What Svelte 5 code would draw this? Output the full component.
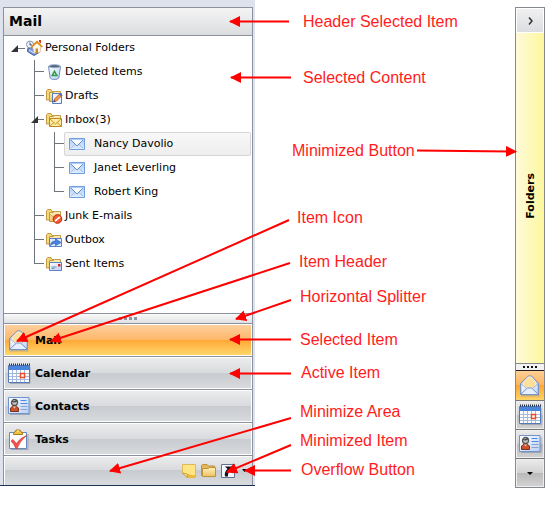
<script>
  const folders = [
    { name: 'Deleted Items', icon: 'bin' },
    { name: 'Drafts', icon: 'drafts' },
    { name: 'Inbox(3)', icon: 'inbox', children: ['Nancy Davolio', 'Janet Leverling', 'Robert King'] },
    { name: 'Junk E-mails', icon: 'junk' },
    { name: 'Outbox', icon: 'outbox' },
    { name: 'Sent Items', icon: 'sent' }
  ];
  const sections = [
    { name: 'Mail', icon: 'mail' },
    { name: 'Calendar', icon: 'calendar' },
    { name: 'Contacts', icon: 'contacts' },
    { name: 'Tasks', icon: 'tasks' }
  ];
  const minimized = [
    { name: 'Notes', icon: 'note' },
    { name: 'Folder list', icon: 'folder' },
    { name: 'Shortcuts', icon: 'shortcut' }
  ];
  let section = $state('Mail');
  let person = $state('Nancy Davolio');

  // Callouts: label position (x, top) and the arrow from its tail to its tip.
  const callouts = [
    { text: 'Header Selected Item', x: 303, y: 13, line: [289, 21.5, 230, 21.5] },
    { text: 'Selected Content', x: 303, y: 69, line: [291, 77.5, 231, 77.5] },
    { text: 'Minimized Button', x: 292, y: 142, line: [417, 150.5, 516, 151.5] },
    { text: 'Item Icon', x: 297, y: 209, line: [289, 220, 17, 341] },
    { text: 'Item Header', x: 299, y: 253, line: [290, 263, 51, 341] },
    { text: 'Horizontal Splitter', x: 300, y: 288, line: [291, 300, 236, 319] },
    { text: 'Selected Item', x: 300, y: 331, line: [291, 339.5, 230, 339.5] },
    { text: 'Active Item', x: 301, y: 364, line: [291, 373.5, 230, 373.5] },
    { text: 'Minimize Area', x: 300, y: 403, line: [291, 418, 110, 471] },
    { text: 'Minimized Item', x: 300, y: 432, line: [291, 445, 227, 472] },
    { text: 'Overflow Button', x: 301, y: 461, line: [291, 470.5, 245, 470.5] }
  ];
</script>

{#snippet folderBase()}
  <path d="M.5 2.500V12h10V3.500H6L5 1.500H1.500z" fill="#f3d676" stroke="#c39a45" />
  <path d="M3.500 13.500v-9h4l1-1h6v10z" fill="url(#folderFill)" stroke="#c39a45" />
{/snippet}

{#snippet icon(name)}
  {#if name === 'home'}
    <svg width="17" height="16" viewBox="0 0 17 16" aria-hidden="true">
      <path d="M2 8 1.500 11.500 8 15.500l5-3V7z" fill="#7b98d8" stroke="#3b5ba5" />
      <path d="M3 10l5 3 4-2" fill="none" stroke="#dfe9ff" />
      <circle cx="4" cy="4.500" r="3.500" fill="#eef2f8" stroke="#8494ad" />
      <path d="M4 2.500v2.500h2" fill="none" stroke="#3b4f77" />
      <path d="M6.500 6.500 11 2.500l4 4-1 6-6 .5z" fill="#fff8e8" stroke="#d6b27a" stroke-width=".7" />
      <path d="M5.500 7 11 1.800 16.300 7" fill="none" stroke="#e08a16" stroke-width="1.700" />
      <path d="M13 0h2v3.500l-2-1.500z" fill="#d23b20" />
      <path d="M9.500 8.500h2.500V13H9.500z" fill="#cc8730" />
    </svg>
  {:else if name === 'bin'}
    <svg width="17" height="16" viewBox="0 0 17 16" aria-hidden="true">
      <path d="M2.500 2.500h12l-1.700 11.500-2 1.300H6.200l-2-1.300z" fill="url(#paper)" stroke="#6c8cc0" />
      <ellipse cx="8.500" cy="2.200" rx="5.700" ry="1.500" fill="#5b6573" stroke="#8faad3" />
      <path d="M8.500 7.300 10.800 11.500H6.200z" fill="none" stroke="#2e9b42" stroke-width="1.500" />
    </svg>
  {:else if name === 'drafts'}
    <svg width="17" height="16" viewBox="0 0 17 16" aria-hidden="true">
      {@render folderBase()}
      <path d="M6.500 5.500h9v10h-9z" fill="#edf3ff" stroke="#5c7dbd" />
      <path d="m7.500 14 1-3 5.500-5.500 2 2-5.500 5.500z" fill="#ef9b45" stroke="#b5522b" stroke-width=".8" />
      <path d="m7.500 14 .6-2 1.400 1.400z" fill="#243050" />
      <path d="m13 6.300 1.200-1.200 2 2L15 8.300z" fill="#486ac0" />
    </svg>
  {:else if name === 'inbox'}
    <svg width="17" height="16" viewBox="0 0 17 16" aria-hidden="true">
      {@render folderBase()}
      <path d="M3.500 6.500h12v8h-12z" fill="#ffeaa0" stroke="#b98a24" />
      <path d="m4 7 5.500 5L15 7M4 14l4-3.500M15 14l-4-3.500" fill="none" stroke="#c7952e" />
    </svg>
  {:else if name === 'junk'}
    <svg width="17" height="16" viewBox="0 0 17 16" aria-hidden="true">
      {@render folderBase()}
      <path d="m3.500 6 5 4 6-4" fill="none" stroke="#d8b156" />
      <circle cx="11.500" cy="11" r="4.300" fill="#f15a31" stroke="#bd260d" />
      <path d="m9 13.200 5-4.400" stroke="#fff" stroke-width="1.600" />
    </svg>
  {:else if name === 'outbox'}
    <svg width="17" height="16" viewBox="0 0 17 16" aria-hidden="true">
      {@render folderBase()}
      <path d="M3.500 6.500h12v8h-12z" fill="#dfeaff" stroke="#5d80c4" />
      <path d="M4.500 13.500c0-3 2-4.500 5-4.500V6.800l5.500 3.700-5.500 3.200v-2.200c-2 0-3.500.5-5 2z" fill="#4b83df" stroke="#255bb3" stroke-width=".6" />
    </svg>
  {:else if name === 'sent'}
    <svg width="17" height="16" viewBox="0 0 17 16" aria-hidden="true">
      {@render folderBase()}
      <path d="M3.500 6.500h12v8h-12z" fill="url(#paper)" stroke="#5d80c4" />
      <path d="M12 8h2.500v2.500H12z" fill="#c52c20" />
      <path d="M5.500 11h5M5.500 12.500h3" stroke="#758bad" />
    </svg>
  {:else if name === 'letter'}
    <svg width="16" height="12" viewBox="0 0 16 12" aria-hidden="true">
      <path d="M.5.5h15v11H.5z" fill="url(#letterFill)" stroke="#6f9ddd" />
      <path d="m2 10 4.500-4M14 10 9.500 6" stroke="#9dbce9" />
      <path d="m2 2 6 6 6-6" fill="#f9fcff" stroke="#6593d5" />
    </svg>
  {:else if name === 'mail'}
    <svg width="22" height="22" viewBox="0 0 22 22" aria-hidden="true">
      <path d="M2 20.500h18.500" stroke="#9f9c98" stroke-width="2" opacity=".6" />
      <path d="M1.500 8.500 9.500 1h3L19.500 8.500v11h-18z" fill="#bcd2f5" stroke="#6d88bb" />
      <path d="M4 7.500 9.500 2h2.800L17 7.500 16 13H5z" fill="#ffdf9c" stroke="#f7efdc" />
      <path d="m2 9 6 4.500h5L19 9v10H2z" fill="url(#paper)" stroke="#8fabd9" stroke-width=".7" />
      <path d="m2 19 6.500-6h4l6.500 6" fill="#e7effd" stroke="#7796c9" />
    </svg>
  {:else if name === 'calendar'}
    <svg width="23" height="22" viewBox="0 0 23 22" aria-hidden="true">
      <path d="M2 20.500h20V4" fill="none" stroke="#9299a5" opacity=".7" />
      <path d="M.5 2.500h21v17H.5z" fill="#fff" stroke="#5479b7" />
      <path d="M1 3h20v4H1z" fill="#4b85db" />
      <path d="M1 10.500h20M1 13.500h20M1 16.500h20M4.500 7v12M8.500 7v12M12.500 7v12M16.500 7v12" stroke="#a5badc" />
      <path d="M1 1.500h21" stroke="#273041" stroke-width="2" stroke-dasharray="1 1" />
      <path d="M12.500 10.500h4v4h-4z" fill="#fff" stroke="#ef4a26" stroke-width="1.500" />
    </svg>
  {:else if name === 'contacts'}
    <svg width="23" height="19" viewBox="0 0 23 19" aria-hidden="true">
      <path d="M2 17.500h20V2" fill="none" stroke="#8d96a6" opacity=".7" />
      <path d="M.5.5h20.500v16H.5z" fill="url(#paper)" stroke="#6e93ce" />
      <circle cx="6.500" cy="5.500" r="3" fill="#c9c7c4" stroke="#555" stroke-width="1.300" />
      <path d="M4 4.500q3 1 5-1" stroke="#444" fill="none" stroke-width="1.300" />
      <path d="M2.500 14.500V11q4-4 8 0v3.500z" fill="#cf502b" stroke="#743422" />
      <path d="m5 9.500 1.500 2 1.500-2" fill="#f5d1ad" />
      <path d="M12.500 3.500h6M12.500 6.500h7" stroke="#4a8ae0" stroke-width="1.200" />
      <path d="M12.500 9.500h7M12.500 12.500h7" stroke="#8aa4ce" />
    </svg>
  {:else if name === 'tasks'}
    <svg width="22" height="22" viewBox="0 0 22 22" aria-hidden="true">
      <path d="M3 20.500h17V5" fill="none" stroke="#8790a0" opacity=".7" />
      <path d="M1.500 3.500h17v16h-17z" fill="#fff" stroke="#6888bb" />
      <path d="M5.500 5.500V3.500q2 0 2.500-2.500h4q.5 2.500 2.500 2.500v2z" fill="#f0c341" stroke="#a77d1c" />
      <path d="M9 1.500h2v1H9z" fill="#fff3b5" />
      <path d="m3 12 2-1.500 3.500 4Q12 9 18.500 6.500 12 12 9 19.500H8Q6 15 3 12z" fill="#ef544c" stroke="#c52f2b" stroke-width=".6" />
    </svg>
  {:else if name === 'note'}
    <svg width="14" height="14" viewBox="0 0 14 14" aria-hidden="true">
      <path d="M.5.5h13v13H5.500L.5 9z" fill="#ffe584" stroke="#dfb958" />
      <path d="M.5 9.500 5 13.500h8.500V11Q9 12 5 9.500z" fill="#efb735" />
      <path d="m.5 9 4.500 1 .5 3.500z" fill="#fff3b9" stroke="#b98a28" stroke-width=".7" />
    </svg>
  {:else if name === 'folder'}
    <svg width="15" height="13" viewBox="0 0 15 13" aria-hidden="true">
      <path d="M.5 11.500v-10l1-1H6l1 1.500h6.500v9.500z" fill="#e5b95a" stroke="#bf923d" />
      <path d="M1.500 12.500v-8h6L8.500 3.500h6v9z" fill="url(#folderFill)" stroke="#bf923d" />
    </svg>
  {:else if name === 'shortcut'}
    <svg width="14" height="14" viewBox="0 0 14 14" aria-hidden="true">
      <path d="M.5.5h13v13H.5z" fill="#f3f7ff" stroke="#5f7395" />
      <path d="M4 2.500h7.500v7L9.200 7.200Q6.500 9 7 12.500H4Q3 8 6.500 5z" fill="#101216" />
    </svg>
  {/if}
{/snippet}

<svg class="defs" width="0" height="0" aria-hidden="true">
  <defs>
    <linearGradient id="folderFill" x1="0" y1="0" x2="0" y2="1"><stop offset="0" stop-color="#fff1bd" /><stop offset="1" stop-color="#ecc25e" /></linearGradient>
    <linearGradient id="paper" x1="0" y1="0" x2="1" y2="1"><stop offset="0" stop-color="#fff" /><stop offset="1" stop-color="#b9d0f6" /></linearGradient>
    <linearGradient id="letterFill" x1="0" y1="0" x2="0" y2="1"><stop offset="0" stop-color="#a9cbf6" /><stop offset="1" stop-color="#e2eefd" /></linearGradient>
  </defs>
</svg>

<main>
  <section class="outlook">
    <div class="frame">
      <h1>{section}</h1>
      <div class="content">
        <div class="root">
          <button class="toggle" aria-label="Collapse Personal Folders"><svg width="7" height="7"><path d="M7 0v7H0z" /></svg></button>
          <span class="stub"></span>
          {@render icon('home')}
          <span>Personal Folders</span>
        </div>
        <ul class="folders">
          {#each folders as folder}
            <li>
              <button class="row">
                {@render icon(folder.icon)}<span>{folder.name}</span>
              </button>
              {#if folder.children}
                <button class="toggle over" aria-label="Collapse {folder.name}"><svg width="7" height="7"><path d="M7 0v7H0z" /></svg></button>
                <ul class="people">
                  {#each folder.children as child}
                    <li>
                      <button class="person" class:current={person === child} onclick={() => (person = child)}>
                        {@render icon('letter')}<span>{child}</span>
                      </button>
                    </li>
                  {/each}
                </ul>
              {/if}
            </li>
          {/each}
        </ul>
      </div>
      <div class="splitter"><i></i><i></i><i></i><i></i></div>
      <nav>
        {#each sections as item}
          <button class="item" class:selected={section === item.name} onclick={() => (section = item.name)}>
            <span class="pic">{@render icon(item.icon)}</span>{item.name}
          </button>
        {/each}
      </nav>
      <div class="tray">
        {#each minimized as item}
          <button aria-label={item.name}>{@render icon(item.icon)}</button>
        {/each}
        <button class="more" aria-label="More"><svg width="5" height="3"><path d="M0 0h5L2.500 3z" /></svg></button>
      </div>
    </div>
  </section>

  <aside>
    <button class="expand" aria-label="Expand"><svg width="5" height="8" viewBox="0 0 5 8"><path d="m1 .5 3 3.500-3 3.500" fill="none" stroke="#333" stroke-width="1.500" /></svg></button>
    <button class="strip"><span>Folders</span></button>
    <div class="grip"><i></i><i></i><i></i><i></i></div>
    {#each sections.slice(0, 3) as item}
      <button class="mini" class:selected={section === item.name} aria-label={item.name} onclick={() => (section = item.name)}>{@render icon(item.icon)}</button>
    {/each}
    <button class="mini" aria-label="More"><svg width="6" height="3"><path d="M0 0h6L3 3z" /></svg></button>
  </aside>

  <svg class="arrows" aria-hidden="true">
    <defs>
      <marker id="head" markerUnits="userSpaceOnUse" markerWidth="12" markerHeight="12" refX="10" refY="5.500" orient="auto">
        <path d="M0 0 11 5.500 0 11z" fill="#f00" />
      </marker>
    </defs>
    {#each callouts as { line: [x1, y1, x2, y2] }}
      <line {x1} {y1} {x2} {y2} marker-end="url(#head)" />
    {/each}
  </svg>
  {#each callouts as c}
    <span class="callout" style="left: {c.x}px; top: {c.y}px">{c.text}</span>
  {/each}
</main>

<style>
  :global(body) { margin: 0; background: #fff; }
  .defs { position: absolute; }
  main {
    position: relative;
    display: flex;
    justify-content: space-between;
    padding-right: 11px;
    font: 11px/14px Verdana, "DejaVu Sans", sans-serif;
    color: #000;
  }
  button {
    margin: 0;
    padding: 0;
    border: 0;
    background: none;
    font: inherit;
    color: inherit;
    display: flex;
    align-items: center;
  }
  svg { display: block; flex: none; }
  ul { list-style: none; margin: 0; padding: 0; }

  .outlook {
    box-sizing: border-box;
    width: 255px;
    align-self: flex-start;
    margin-bottom: 2px;
    padding: 7px 2px 0 3px;
    background: #dde2ec;
    border-bottom: 1px solid #1f3150;
  }
  .frame { border: 1px solid #8b929e; border-bottom: 0; background: #fff; }
  h1 {
    margin: 0;
    padding: 4px 5px 5px;
    font: bold 14px/18px Verdana, "DejaVu Sans", sans-serif;
    border-bottom: 1px solid #8b929e;
    background: linear-gradient(#f4f4f5, #e9eaeb 45%, #dadcdf);
  }
  .content { padding-bottom: 37px; }
  .root { display: flex; align-items: center; height: 24px; padding-left: 7px; }
  .root span:last-child { margin-left: 2px; }
  .toggle path { fill: #333; }
  .stub { width: 7px; height: 1px; margin-right: 1px; background: #6f737a; }

  .folders { margin-left: 30px; }
  .people { margin-left: 20px; }
  li {
    position: relative;
    background:
      linear-gradient(#6f737a, #6f737a) 0 0 / 1px 100% no-repeat,
      linear-gradient(#6f737a, #6f737a) 0 11px / 10px 1px no-repeat;
  }
  li:last-child {
    background:
      linear-gradient(#6f737a, #6f737a) 0 0 / 1px 12px no-repeat,
      linear-gradient(#6f737a, #6f737a) 0 11px / 10px 1px no-repeat;
  }
  .row { height: 24px; padding-left: 12px; gap: 2px; }
  .over { position: absolute; left: -3px; top: 8px; }
  .person {
    box-sizing: border-box;
    width: calc(100% - 11px);
    height: 24px;
    margin-left: 10px;
    padding-left: 4px;
    gap: 9px;
    border: 1px solid transparent;
    border-radius: 2px;
  }
  .person.current { border-color: #d6d6d6; background: linear-gradient(#f8f8f8, #eee); }

  .splitter {
    display: flex;
    justify-content: center;
    align-items: center;
    gap: 2px;
    height: 9px;
    border: solid #8b929e;
    border-width: 1px 0;
    background: linear-gradient(#fafafa, #dfe0e3);
  }
  .splitter i { width: 3px; height: 3px; background: #8e949e; }

  .item {
    box-sizing: border-box;
    width: 100%;
    height: 33px;
    padding: 1px 4px 0;
    gap: 3px;
    font-weight: bold;
    border-bottom: 1px solid #8b929e;
    box-shadow: inset 0 0 0 1px #fff;
    background: linear-gradient(#ededee, #d8dadd 49%, #c8cbcf 50%, #d9dbde);
  }
  .item.selected { background: linear-gradient(#fdd0a0, #fdb869 49%, #ffa836 50%, #ffd96e); }
  .pic { width: 24px; }
  .tray {
    display: flex;
    align-items: center;
    justify-content: flex-end;
    gap: 5px;
    height: 29px;
    padding-right: 5px;
    box-shadow: inset 1px 1px 0 #fff;
    background: linear-gradient(#ededee, #d8dadd 49%, #c8cbcf 50%, #d9dbde);
  }
  .more { margin-left: 2px; }

  aside {
    box-sizing: border-box;
    width: 30px;
    margin-top: 7px;
    display: flex;
    flex-direction: column;
    border: 1px solid #858a91;
  }
  .expand {
    height: 25px;
    justify-content: center;
    box-shadow: inset 0 0 0 1px #fff;
    background: linear-gradient(#f1f1f2, #dadcdf);
  }
  .strip {
    flex: 1;
    justify-content: center;
    padding: 0 0 4px 2px;
    font-weight: bold;
    background: linear-gradient(90deg, #fffad9, #fdf89c);
  }
  .strip span { writing-mode: vertical-rl; transform: rotate(180deg); }
  .grip {
    display: flex;
    justify-content: center;
    align-items: center;
    gap: 2px;
    height: 6px;
    border-top: 1px solid #858a91;
    background: #f2f2f2;
  }
  .grip i { width: 2px; height: 2px; background: #111; }
  .mini {
    box-sizing: border-box;
    height: 29px;
    justify-content: center;
    border-top: 1px solid #777;
    box-shadow: inset 0 0 0 1px #eee;
    background: linear-gradient(#ececec, #d2d2d2 49%, #b9b9b9 50%, #d3d3d3);
  }
  .mini.selected { height: 30px; border-color: #222; box-shadow: none; background: linear-gradient(#fdcf97, #fdb55c 49%, #ffa62f 50%, #ffd467); }

  .arrows { position: absolute; left: 0; top: 0; width: 100%; height: 100%; pointer-events: none; }
  .arrows line { stroke: #f00; stroke-width: 2; }
  .callout {
    position: absolute;
    font: 16px/18px Arial, "Liberation Sans", sans-serif;
    color: #ff1c1c;
    white-space: nowrap;
    pointer-events: none;
  }
</style>
